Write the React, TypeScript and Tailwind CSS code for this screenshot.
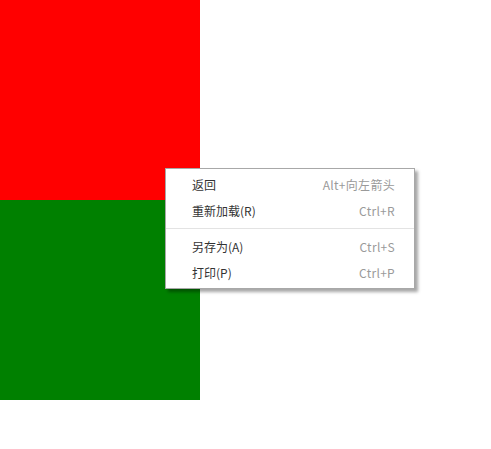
const items = [
  { label: "返回", key: "Alt+向左箭头" },
  { label: "重新加载(R)", key: "Ctrl+R" },
  null,
  { label: "另存为(A)", key: "Ctrl+S" },
  { label: "打印(P)", key: "Ctrl+P" },
]

export default function App() {
  return (
    <div
      className="relative h-[449px] w-[491px] bg-white"
      style={{ fontFamily: '"Noto Sans CJK SC", "Noto Sans", sans-serif' }}
    >
      <div className="h-[200px] w-[200px] bg-[#ff0000]" />
      <div className="h-[200px] w-[200px] bg-[#008000]" />

      {/* context menu */}
      <div className="absolute left-[165px] top-[168px] w-[250px] border border-[#a8a8a8] bg-white pt-[3px] pb-[2px] shadow-[3px_3px_3px_rgba(0,0,0,0.35)]">
        {items.map((it, i) =>
          it ? (
            <div key={i} className="flex h-[26px] items-center justify-between pl-[26px] pr-[19px] text-[12px]">
              <span className="text-[#333]">{it.label}</span>
              <span className="tracking-[0.3px] text-[#9a9a9a]">{it.key}</span>
            </div>
          ) : (
            <div key={i} className="pt-[4px] pb-[5px]">
              <div className="h-px bg-[#e3e3e3]" />
            </div>
          ),
        )}
      </div>
    </div>
  )
}
